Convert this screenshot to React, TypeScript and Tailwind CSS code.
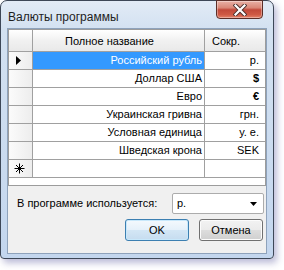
import React from "react";

const rows = [
  { name: "Российский рубль", short: "р.", selected: true },
  { name: "Доллар США", short: "$", bold: true },
  { name: "Евро", short: "€", bold: true },
  { name: "Украинская гривна", short: "грн." },
  { name: "Условная единица", short: "у. е." },
  { name: "Шведская крона", short: "SEK" },
];

function CloseButton() {
  return (
    <div className="ml-auto mr-[4px] -mt-px w-[47px] h-[19px] rounded-b-[4px] border border-[#5b2e28] bg-[linear-gradient(to_bottom,#e9b1a6_0%,#d98777_40%,#c2493a_52%,#cf5a45_80%,#e4826a_100%)] flex items-center justify-center shadow-[inset_0_0_0_1px_rgba(255,255,255,0.35)]">
      <svg width="14" height="12" viewBox="0 0 14 12">
        <path d="M2.5 1.5 L11.5 10.5 M11.5 1.5 L2.5 10.5" stroke="#4a2f2c" strokeWidth="4" strokeLinecap="square" />
        <path d="M2.5 1.5 L11.5 10.5 M11.5 1.5 L2.5 10.5" stroke="#ffffff" strokeWidth="2.2" strokeLinecap="square" />
      </svg>
    </div>
  );
}

function RowHeader({ mark }: { mark?: "current" | "new" }) {
  return (
    <div className="w-[24px] shrink-0 border-r border-[#a0a0a0] bg-[linear-gradient(to_right,#fbfbfb,#ededed)] flex items-center pl-[6px]">
      {mark === "current" && (
        <svg width="6" height="9" viewBox="0 0 6 9">
          <path d="M1 0 L6 4.5 L1 9 Z" fill="#000" />
        </svg>
      )}
      {mark === "new" && (
        <svg width="11" height="11" viewBox="0 0 11 11" className="ml-[-1px]">
          <path d="M5.5 0.5 V10.5 M0.5 5.5 H10.5 M2 2 L9 9 M9 2 L2 9" stroke="#000" strokeWidth="1" />
        </svg>
      )}
    </div>
  );
}

export default function App() {
  return (
    <div className="w-[284px] h-[270px] bg-white font-['Liberation_Sans',Arial,sans-serif] text-[11px] text-black">
      <div className="w-[274px] h-[259px] border border-[#3d4757] rounded-t-[7px] rounded-b-[4px] bg-[linear-gradient(to_bottom,#e2ebf6_0px,#d3e1f1_28px,#c3d6ee_100%)] shadow-[3px_4px_7px_rgba(60,60,140,0.35)] flex flex-col px-[6px] pb-[4px]">
        {/* title bar */}
        <div className="h-[27px] shrink-0 flex items-start">
          <span className="text-[12px] mt-[7px] ml-[1px] text-[#1e1e1e]">Валюты программы</span>
          <CloseButton />
        </div>

        {/* client area */}
        <div className="flex-1 border border-[#8ea2bb] bg-[#f0f0f0] flex flex-col">
          {/* grid */}
          <div className="h-[157px] shrink-0 border border-[#9c9c9c] bg-white flex flex-col">
            <div className="h-[22px] shrink-0 flex border-b border-[#a0a0a0] bg-[linear-gradient(to_bottom,#ffffff,#f1f1f1_50%,#e9e9e9)]">
              <div className="w-[24px] shrink-0 border-r border-[#a0a0a0]" />
              <div className="w-[172px] shrink-0 border-r border-[#a0a0a0] flex items-center justify-center pr-[18px] pt-[2px]">
                Полное название
              </div>
              <div className="flex-1 flex items-center justify-center pr-[18px] pt-[2px]">Сокр.</div>
            </div>
            {rows.map((r, i) => (
              <div key={i} className="h-[18px] shrink-0 flex border-b border-[#a0a0a0]">
                <RowHeader mark={r.selected ? "current" : undefined} />
                <div
                  className={
                    r.selected
                      ? "w-[172px] shrink-0 border-r border-[#a0a0a0] bg-[#3399ff] text-white flex items-center justify-end pr-[2px]"
                      : "w-[172px] shrink-0 border-r border-[#a0a0a0] flex items-center justify-end pr-[2px]"
                  }
                >
                  {r.name}
                </div>
                <div className={r.bold ? "flex-1 flex items-center justify-end pr-[6px] font-bold" : "flex-1 flex items-center justify-end pr-[6px]"}>
                  {r.short}
                </div>
              </div>
            ))}
            <div className="h-[18px] shrink-0 flex border-b border-[#a0a0a0]">
              <RowHeader mark="new" />
              <div className="w-[172px] shrink-0 border-r border-[#a0a0a0]" />
              <div className="flex-1" />
            </div>
          </div>

          {/* currency in use */}
          <div className="mt-[7px] h-[21px] flex items-center pl-[9px] pr-[2px]">
            <span>В программе используется:</span>
            <div className="ml-auto w-[92px] h-[21px] border border-[#acacac] rounded-[2px] bg-white flex items-center pl-[4px] pr-[6px]">
              <span>р.</span>
              <svg width="7" height="4" viewBox="0 0 7 4" className="ml-auto">
                <path d="M0 0 H7 L3.5 4 Z" fill="#000" />
              </svg>
            </div>
          </div>

          {/* buttons */}
          <div className="mt-[5px] flex justify-end gap-[10px] pr-[3px]">
            <button className="w-[64px] h-[22px] rounded-[3px] border border-[#3c7fb1] bg-[linear-gradient(to_bottom,#f4f9fd,#e6f1fa_48%,#d3e6f5_52%,#c6dcef)] shadow-[inset_0_0_0_1px_#c8e8fb] flex items-center justify-center">
              OK
            </button>
            <button className="w-[64px] h-[22px] rounded-[3px] border border-[#707070] bg-[linear-gradient(to_bottom,#f2f2f2,#ebebeb_48%,#dddddd_52%,#cfcfcf)] shadow-[inset_0_0_0_1px_#fcfcfc] flex items-center justify-center">
              Отмена
            </button>
          </div>
        </div>
      </div>
    </div>
  );
}
